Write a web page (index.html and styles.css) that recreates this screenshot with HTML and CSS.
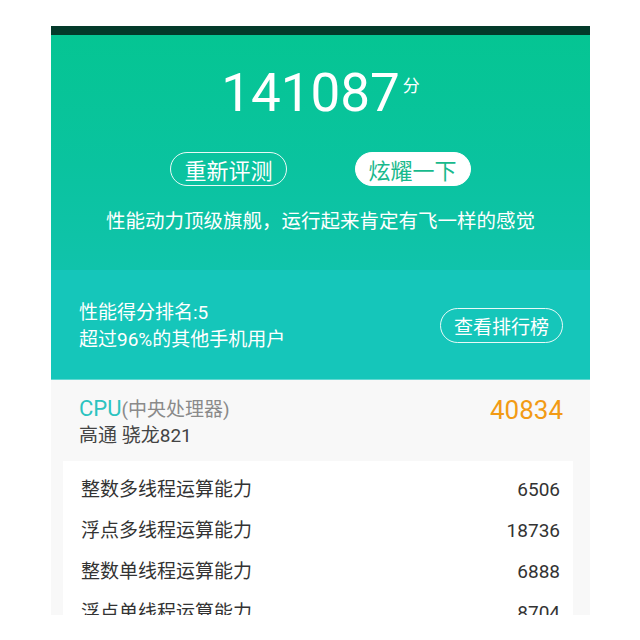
FILE: index.html
```html
<!DOCTYPE html>
<html lang="zh-CN">
<head>
<meta charset="utf-8">
<title>跑分结果</title>
<link rel="stylesheet" href="styles.css">
</head>
<body>
<div class="phone">
  <div class="statusbar"></div>
  <section class="hero">
    <div class="score">141087<span class="unit">分</span></div>
    <div class="actions">
      <button class="btn btn-outline">重新评测</button>
      <button class="btn btn-solid">炫耀一下</button>
    </div>
    <p class="tagline">性能动力顶级旗舰，运行起来肯定有飞一样的感觉</p>
  </section>
  <section class="rank">
    <div class="rank-text">
      <div>性能得分排名:5</div>
      <div>超过96%的其他手机用户</div>
    </div>
    <button class="btn btn-outline btn-rank">查看排行榜</button>
  </section>
  <section class="cpu">
    <div class="cpu-info">
      <div class="cpu-title"><span class="cpu-name">CPU</span><span class="cpu-sub">(中央处理器)</span></div>
      <div class="cpu-model">高通 骁龙821</div>
    </div>
    <div class="cpu-score">40834</div>
  </section>
  <section class="details">
    <div class="row"><span>整数多线程运算能力</span><span>6506</span></div>
    <div class="row"><span>浮点多线程运算能力</span><span>18736</span></div>
    <div class="row"><span>整数单线程运算能力</span><span>6888</span></div>
    <div class="row"><span>浮点单线程运算能力</span><span>8704</span></div>
  </section>
</div>
</body>
</html>
```

FILE: styles.css
```css
html, body {
  margin: 0;
  padding: 0;
  background: #ffffff;
}
body {
  font-family: Roboto, "Noto Sans CJK SC", sans-serif;
  padding-top: 26px;
}
.phone {
  margin-left: 51px;
  width: 539px;
  height: 589px;
  overflow: hidden;
  background: #f8f8f8;
}
.statusbar {
  height: 9px;
  background: #033a2a;
}
.hero {
  height: 235px;
  box-sizing: border-box;
  padding-top: 25px;
  background: linear-gradient(180deg, #05c593 0%, #0ac39f 55%, #10c3ab 100%);
  color: #ffffff;
  text-align: center;
}
.score {
  font-size: 53px;
  line-height: 53px;
  height: 53px;
  font-weight: 400;
  letter-spacing: 0;
}
.unit {
  font-size: 17px;
  vertical-align: 19px;
  margin-left: 3px;
}
.actions {
  margin-top: 39px;
  display: flex;
  justify-content: center;
  gap: 68px;
}
.btn {
  font-family: "Noto Sans CJK SC", sans-serif;
  font-size: 22px;
  height: 34px;
  line-height: 30px;
  padding: 0 13px;
  border-radius: 17px;
  border: 1.5px solid #ffffff;
  box-sizing: border-box;
  margin: 0;
}
.btn-outline {
  background: transparent;
  color: #ffffff;
  border-color: rgba(255,255,255,0.9);
}
.btn-solid {
  background: #ffffff;
  color: #17b98c;
}
.tagline {
  margin: 22px 0 0;
  font-size: 19.5px;
  line-height: 28px;
}
.rank {
  height: 110px;
  box-sizing: border-box;
  background: #15c6ba;
  border-bottom: 1px solid #62d8d2;
  display: flex;
  align-items: center;
  justify-content: space-between;
  padding: 2px 27px 0 28px;
  color: #ffffff;
}
.rank-text {
  font-size: 19px;
  line-height: 27px;
}
.btn-rank {
  font-size: 19px;
  height: 35px;
  line-height: 31px;
  border-radius: 18px;
  padding: 0 13px;
}
.cpu {
  height: 81px;
  box-sizing: border-box;
  background: #f8f8f8;
  display: flex;
  justify-content: space-between;
  align-items: flex-start;
  padding: 15px 27px 0 28px;
}
.cpu-title {
  line-height: 28px;
  height: 28px;
}
.cpu-name {
  font-size: 22px;
  color: #2cc3c0;
}
.cpu-sub {
  font-size: 19px;
  color: #8a8a8a;
}
.cpu-model {
  font-size: 19px;
  line-height: 26px;
  color: #444444;
}
.cpu-score {
  font-size: 26px;
  line-height: 30px;
  color: #f29b15;
}
.details {
  margin: 0 17px 0 12px;
  background: #ffffff;
  padding: 8px 13px 0 18px;
}
.row {
  display: flex;
  justify-content: space-between;
  height: 41px;
  line-height: 41px;
  font-size: 19px;
  color: #333333;
}
```
